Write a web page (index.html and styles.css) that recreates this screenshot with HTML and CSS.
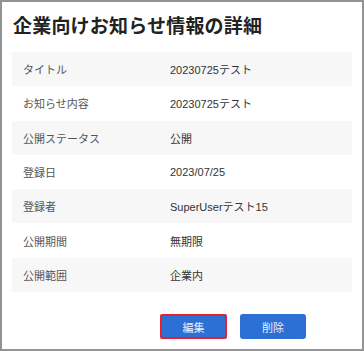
FILE: index.html
```html
<!DOCTYPE html>
<html lang="ja">
<head>
<meta charset="utf-8">
<link rel="stylesheet" href="styles.css">
</head>
<body>
<div class="dialog">
  <h1 class="title">企業向けお知らせ情報の詳細</h1>
  <div class="details">
    <div class="row"><div class="label">タイトル</div><div class="value">20230725テスト</div></div>
    <div class="row"><div class="label">お知らせ内容</div><div class="value">20230725テスト</div></div>
    <div class="row"><div class="label">公開ステータス</div><div class="value">公開</div></div>
    <div class="row"><div class="label">登録日</div><div class="value">2023/07/25</div></div>
    <div class="row"><div class="label">登録者</div><div class="value">SuperUserテスト15</div></div>
    <div class="row"><div class="label">公開期間</div><div class="value">無期限</div></div>
    <div class="row"><div class="label">公開範囲</div><div class="value">企業内</div></div>
  </div>
  <div class="actions">
    <button class="btn btn-focus">編集</button>
    <button class="btn">削除</button>
  </div>
</div>
</body>
</html>
```
FILE: styles.css
```css
* { box-sizing: border-box; }
html, body { margin: 0; padding: 0; background: #fff; }
body {
  font-family: "Liberation Sans", "Noto Sans CJK JP", sans-serif;
  color: #333;
}
.dialog {
  width: 364px;
  height: 351px;
  border: 2px solid #939393;
  box-shadow: inset 0 0 0 0 #fff;
  padding: 12px 10px 0 10px;
  background: #fff;
}
.title {
  margin: 0 0 12px 1px;
  font-size: 19px;
  line-height: 26px;
  font-weight: bold;
  color: #222;
  letter-spacing: 0.2px;
}
.details {
  display: flex;
  flex-direction: column;
}
.row {
  display: grid;
  grid-template-columns: 158px 1fr;
  align-items: center;
  height: 34.3px;
  font-size: 11px;
}
.row:nth-child(odd) { background: #f7f7f7; }
.label { padding-left: 11px; color: #555; }
.value { color: #333; }
.actions {
  display: flex;
  justify-content: flex-end;
  gap: 13px;
  margin-top: 22px;
  padding-right: 46px;
}
.btn {
  width: 66px;
  height: 25px;
  border: 0;
  border-radius: 3px;
  background: #2c6fd5;
  color: #e8eefb;
  font-family: "Liberation Sans", "Noto Sans CJK JP", sans-serif;
  font-size: 11px;
  padding: 0;
}
.btn-focus {
  width: 67px;
  border: 2px solid #e8202a;
  border-radius: 2px;
}
```
